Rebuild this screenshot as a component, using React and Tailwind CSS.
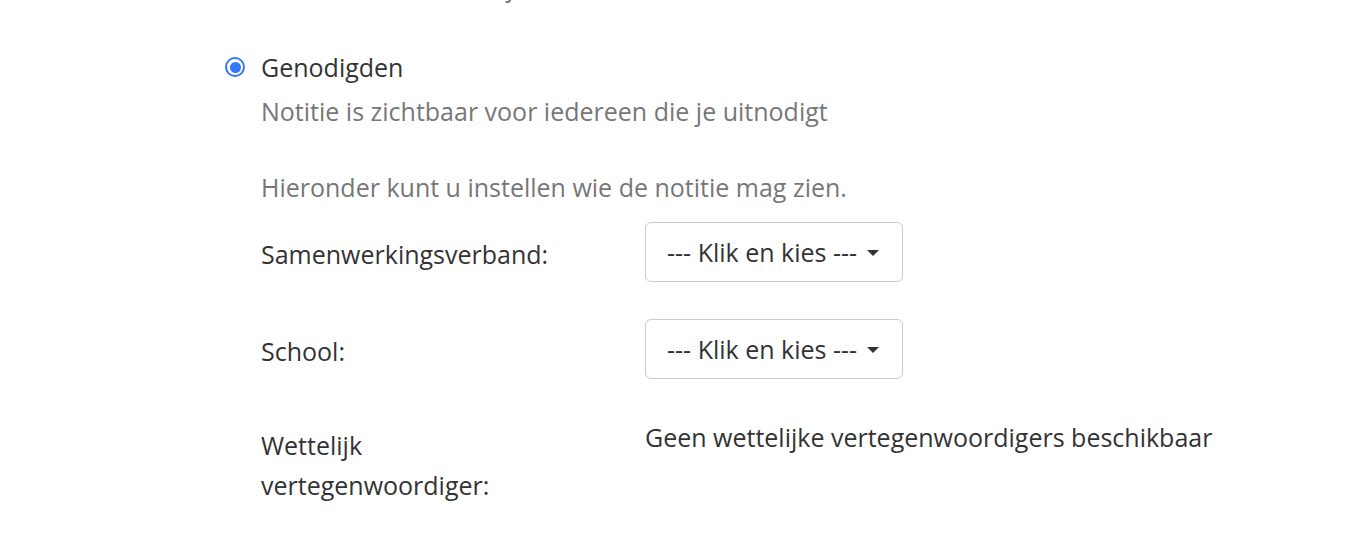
import React from "react";

const Select = () => (
  <div className="w-[258px] h-[60px] border border-[#cccccc] rounded-[6px] bg-white flex items-center pl-[21px] text-[#333333] leading-[30px] shrink-0">
    <span>--- Klik en kies ---</span>
    <span className="ml-[10px] mt-[2px] w-0 h-0 border-l-[6px] border-r-[6px] border-t-[6px] border-l-transparent border-r-transparent border-t-[#333333]" />
  </div>
);

const Row = ({ label, children, labelClass = "mt-[17px]", className = "" }) => (
  <div className={`grid grid-cols-[384px_1fr] ${className}`}>
    <div className={`pr-[80px] text-[#333333] ${labelClass}`}>{label}</div>
    <div>{children}</div>
  </div>
);

export default function App() {
  return (
    <div
      className="w-full h-[546px] bg-white overflow-hidden text-[25px] leading-[30px]"
      style={{ fontFamily: '"Open Sans", "Noto Sans", sans-serif' }}
    >
      <div className="pl-[225px]">
        {/* tail of the previous option */}
        <div className="-mt-[28px] pl-[30px] text-[#777777]">Alleen zichtbaar voor jou</div>

        <div className="mt-[50px] flex items-center">
          <span className="w-[20px] h-[20px] rounded-full border-[2.5px] border-[#3478f6] flex items-center justify-center">
            <span className="w-[11px] h-[11px] rounded-full bg-[#3478f6]" />
          </span>
          <span className="ml-[16px] text-[#333333]">Genodigden</span>
        </div>

        <div className="pl-[36px]">
          <p className="mt-[14px] text-[#777777]">Notitie is zichtbaar voor iedereen die je uitnodigt</p>
          <p className="mt-[46px] text-[#777777]">Hieronder kunt u instellen wie de notitie mag zien.</p>

          <Row label="Samenwerkingsverband:" className="mt-[20px]">
            <Select />
          </Row>
          <Row label="School:" className="mt-[37px]">
            <Select />
          </Row>
          <Row
            label="Wettelijk vertegenwoordiger:"
            labelClass="mt-[3px] leading-[40px]"
            className="mt-[43px]"
          >
            <p className="text-[#333333]">Geen wettelijke vertegenwoordigers beschikbaar</p>
          </Row>
        </div>
      </div>
    </div>
  );
}
